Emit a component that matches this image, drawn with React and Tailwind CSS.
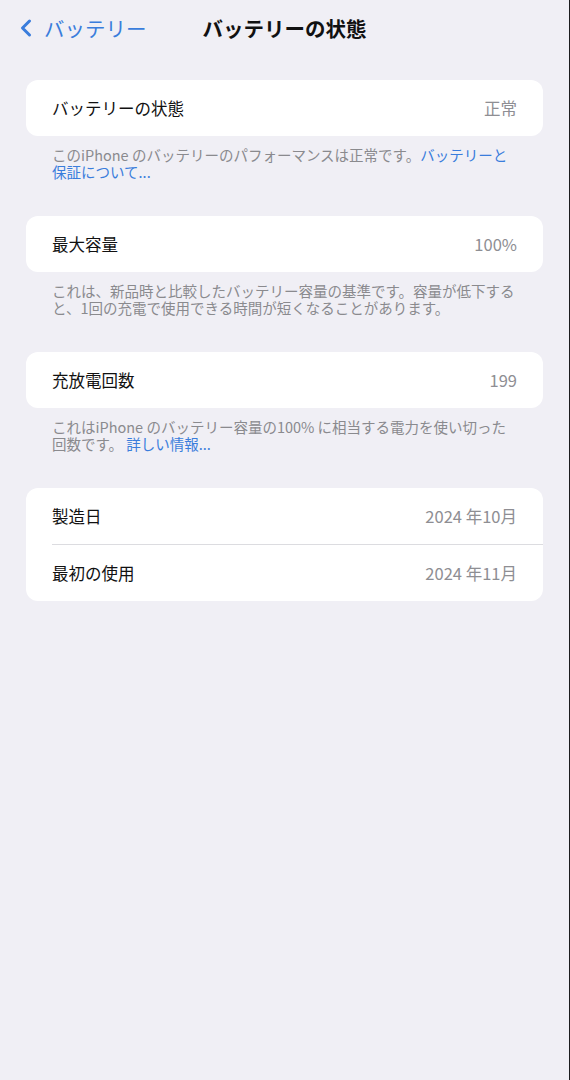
import { ChevronLeft } from 'lucide-react';

const font = { fontFamily: '"Noto Sans CJK JP", "Noto Sans", sans-serif' };

// 単一行のセル
function Row({ label, value }) {
  return (
    <div className="flex h-[56px] items-center justify-between px-[26px]">
      <span className="text-[16.5px] text-[#111]">{label}</span>
      <span className="text-[16.5px] text-[#8e8e93]">{value}</span>
    </div>
  );
}

function Footer({ children }) {
  return (
    <p className="mt-[9.5px] mb-[35.5px] px-[26px] text-[14.5px] leading-[17.5px] text-[#8a8a8e] whitespace-nowrap">
      {children}
    </p>
  );
}

export default function App() {
  return (
    <div style={font} className="flex min-h-[1080px] w-[570px] bg-[#f0eff5]">
      <div className="flex-1 px-[26px]">
        {/* ナビゲーションバー */}
        <div className="-mx-[26px] grid h-[56px] grid-cols-[1fr_auto_1fr] items-center">
          <div className="flex items-center pl-[12px] text-[#3a7ddc]">
            <ChevronLeft size={28} strokeWidth={2.6} className="-mr-[1px]" />
            <span className="ml-[5px] text-[20.5px]">バッテリー</span>
          </div>
          <h1 className="text-[20.5px] font-bold text-[#111]">バッテリーの状態</h1>
          <div />
        </div>

        <div className="mt-[24px] overflow-hidden rounded-[12px] bg-white">
          <Row label="バッテリーの状態" value="正常" />
        </div>
        <Footer>
          このiPhone のバッテリーのパフォーマンスは正常です。<span className="text-[#3a7ddc]">バッテリーと</span>
          <br />
          <span className="text-[#3a7ddc]">保証について...</span>
        </Footer>

        <div className="overflow-hidden rounded-[12px] bg-white">
          <Row label="最大容量" value="100%" />
        </div>
        <Footer>
          これは、新品時と比較したバッテリー容量の基準です。容量が低下する
          <br />
          と、1回の充電で使用できる時間が短くなることがあります。
        </Footer>

        <div className="overflow-hidden rounded-[12px] bg-white">
          <Row label="充放電回数" value="199" />
        </div>
        <Footer>
          これはiPhone のバッテリー容量の100% に相当する電力を使い切った
          <br />
          回数です。 <span className="text-[#3a7ddc]">詳しい情報...</span>
        </Footer>

        <div className="overflow-hidden rounded-[12px] bg-white">
          <Row label="製造日" value="2024 年10月" />
          <div className="ml-[26px] border-t border-[#dcdce0]" />
          <Row label="最初の使用" value="2024 年11月" />
        </div>
      </div>
      <div className="w-[1px] bg-[#1c1c1e]" />
    </div>
  );
}
